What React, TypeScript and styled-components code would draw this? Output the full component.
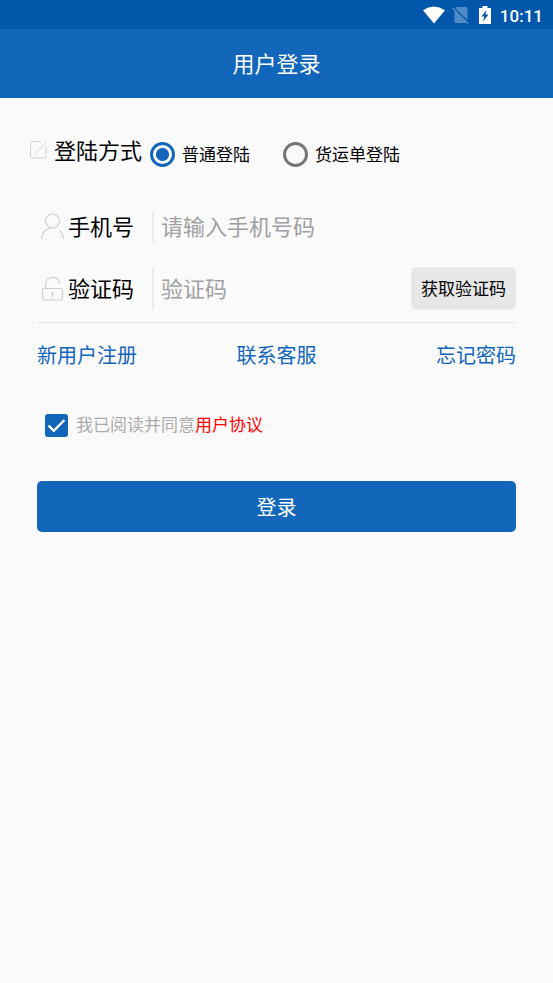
import React, { useState } from "react";
import styled, { createGlobalStyle } from "styled-components";

const blue = "#1166b9";

const GlobalStyle = createGlobalStyle`
  *, *::before, *::after { box-sizing: border-box; }
  body {
    margin: 0;
    background: #fafafa;
    color: #000;
    font-family: "Noto Sans CJK SC", sans-serif;
  }
  button, input { font-family: inherit; }
`;

const StatusBar = styled.div`
  display: flex;
  align-items: center;
  justify-content: flex-end;
  height: 29px;
  padding-right: 10px;
  background: #0257ab;
  color: #fff;
`;

const StatusIcon = styled.svg<{ $gap: number }>`
  flex: none;
  margin-right: ${(p) => p.$gap}px;
`;

const Clock = styled.time`
  font: 500 17px/20px Roboto, sans-serif;
  padding-top: 2px;
`;

const Header = styled.header`
  display: flex;
  align-items: center;
  justify-content: center;
  height: 69px;
  padding-bottom: 4px;
  background: ${blue};
  color: #fff;
`;

const Title = styled.h1`
  margin: 0;
  font-size: 22px;
  line-height: 32px;
  font-weight: 400;
`;

const Form = styled.form`
  padding: 34px 37px;
`;

const ModeRow = styled.fieldset`
  display: flex;
  align-items: center;
  min-width: 0;
  height: 34px;
  margin: 0 0 0 -8px;
  padding: 0;
  border: 0;
`;

const ModeTitle = styled.span`
  margin: 0 8px 0 6px;
  font-size: 22px;
  line-height: 32px;
  white-space: nowrap;
`;

const Options = styled.div`
  display: flex;
  gap: 33px;
  padding-top: 10px;
`;

const Option = styled.label`
  display: flex;
  align-items: center;
  gap: 7px;
  font-size: 17px;
  line-height: 26px;
  white-space: nowrap;
`;

const Radio = styled.input`
  appearance: none;
  width: 25px;
  height: 25px;
  margin: 0;
  border: 3px solid #757575;
  border-radius: 50%;
  &:checked {
    border-color: ${blue};
    background: radial-gradient(circle, ${blue} 6px, transparent 7px);
  }
`;

const Fields = styled.div`
  display: grid;
  grid-template-columns: minmax(0, 1fr);
  gap: 25px;
  margin-top: 45px;
  padding-bottom: 12px;
  border-bottom: 1px solid #e5e5e5;
`;

const FieldRow = styled.div`
  display: flex;
  align-items: center;
  padding-left: 3px;
`;

const FieldLabel = styled.label`
  display: flex;
  align-items: center;
  gap: 3px;
  width: 112px;
  font-size: 22px;
  line-height: 28px;
  white-space: nowrap;
`;

const LabelText = styled.span`
  padding-bottom: 3px;
`;

const TextField = styled.input<{ $tall?: boolean }>`
  flex: 1;
  min-width: 0;
  height: ${(p) => (p.$tall ? 43 : 31)}px;
  padding: 0 7px 4px;
  border: 0;
  border-left: 2px solid #ececec;
  background: transparent;
  font-size: 22px;
  line-height: 27px;
  outline: none;
  &::placeholder { color: #a0a0a0; opacity: 1; }
`;

const CodeButton = styled.button`
  flex: none;
  height: 43px;
  padding: 0 9px 2px;
  border: 1px solid #ececec;
  border-radius: 5px;
  background: #e7e7e7;
  color: #000;
  font-size: 17px;
  white-space: nowrap;
`;

const Links = styled.nav`
  display: grid;
  grid-template-columns: 1fr auto 1fr;
  margin-top: 17px;
`;

const TextLink = styled.a`
  color: ${blue};
  font-size: 20px;
  line-height: 30px;
  text-decoration: none;
  &:last-child { justify-self: end; }
  &:first-child { justify-self: start; }
`;

const Agreement = styled.div`
  display: flex;
  align-items: center;
  gap: 8px;
  margin: 41px 0 0 8px;
  color: #aaa;
  font-size: 17px;
  line-height: 26px;
`;

const AgreementText = styled.span`
  padding-bottom: 2px;
`;

const CheckWrap = styled.span`
  display: grid;
  width: 23px;
  height: 23px;
  > * { grid-area: 1 / 1; }
  > svg { pointer-events: none; }
`;

const Checkbox = styled.input`
  appearance: none;
  width: 23px;
  height: 23px;
  margin: 0;
  border: 2px solid #757575;
  border-radius: 3px;
  &:checked { border-color: ${blue}; background: ${blue}; }
`;

const AgreementLink = styled.a`
  color: #f00;
  text-decoration: none;
`;

const Submit = styled.button`
  display: block;
  width: 100%;
  height: 51px;
  margin-top: 42px;
  padding: 0;
  border: 0;
  border-radius: 5px;
  background: ${blue};
  color: #fff;
  font-size: 20px;
`;

const EditIcon = () => (
  <svg width="19" height="19" viewBox="0 0 19 19" fill="none" stroke="#d2d2d2" aria-hidden="true">
    <path d="M11.500 1.500H3.500Q1.500 1.500 1.500 3.500v12.500q0 2 2 2h11.500q2 0 2-2V7M5 14.500 17.500 2" />
  </svg>
);

const UserIcon = () => (
  <svg width="25" height="27" viewBox="0 0 25 27" fill="none" stroke="#cfcfcf" strokeWidth="1.2" aria-hidden="true">
    <circle cx="12.500" cy="8" r="7" />
    <path d="M1.500 26c.2-6 4-11 11-11M19.500 17.500q3.500 3 3.800 8.500" />
  </svg>
);

const LockIcon = () => (
  <svg width="25" height="25" viewBox="0 0 25 25" fill="none" stroke="#cfcfcf" strokeWidth="1.2" aria-hidden="true">
    <rect x="2.500" y="12.500" width="20" height="11.500" rx="1.800" />
    <path d="M5.500 12.500V9c0-10 14-10 14.500-1.500M12.500 17v4" />
    <circle cx="12.500" cy="17" r=".7" />
  </svg>
);

export default function App() {
  const [mode, setMode] = useState("normal");
  const [agreed, setAgreed] = useState(true);
  return (
    <>
      <GlobalStyle />
      <StatusBar>
        <StatusIcon $gap={7} width="22" height="18" viewBox="0 0 22 18" aria-hidden="true">
          <path d="M0 4.200Q11-3.200 22 4.200L11 17.500Z" fill="#fff" />
        </StatusIcon>
        <StatusIcon $gap={10} width="17" height="18" viewBox="0 0 17 18" aria-hidden="true">
          <path d="M5 1h9q1.500 0 1.500 1.500V14L3.500 2.500ZM2.500 4.500 14.500 17H4q-1.500 0-1.500-1.500Z" fill="#4f8cc7" />
          <path d="m.5 2 15.500 15.500" stroke="#4f8cc7" strokeWidth="1.500" />
        </StatusIcon>
        <StatusIcon $gap={9} width="12" height="18" viewBox="0 0 12 18" aria-hidden="true">
          <path d="M3.500 0h5v2H12v16H0V2h3.500Z" fill="#fff" />
          <path d="M7.500 4 2.500 10.500h2.800L4 15.500l5.500-7H6.600Z" fill="#0257ab" />
        </StatusIcon>
        <Clock>10:11</Clock>
      </StatusBar>
      <Header>
        <Title>用户登录</Title>
      </Header>
      <Form onSubmit={(e) => e.preventDefault()}>
        <ModeRow aria-labelledby="mode-title">
          <EditIcon />
          <ModeTitle id="mode-title">登陆方式</ModeTitle>
          <Options>
            <Option>
              <Radio type="radio" name="mode" checked={mode === "normal"} onChange={() => setMode("normal")} />
              普通登陆
            </Option>
            <Option>
              <Radio type="radio" name="mode" checked={mode === "waybill"} onChange={() => setMode("waybill")} />
              货运单登陆
            </Option>
          </Options>
        </ModeRow>
        <Fields>
          <FieldRow>
            <FieldLabel htmlFor="phone"><UserIcon /><LabelText>手机号</LabelText></FieldLabel>
            <TextField id="phone" type="tel" placeholder="请输入手机号码" />
          </FieldRow>
          <FieldRow>
            <FieldLabel htmlFor="code"><LockIcon /><LabelText>验证码</LabelText></FieldLabel>
            <TextField id="code" $tall placeholder="验证码" />
            <CodeButton type="button">获取验证码</CodeButton>
          </FieldRow>
        </Fields>
        <Links>
          <TextLink href="#register">新用户注册</TextLink>
          <TextLink href="#support">联系客服</TextLink>
          <TextLink href="#forgot">忘记密码</TextLink>
        </Links>
        <Agreement>
          <CheckWrap>
            <Checkbox id="agree" type="checkbox" checked={agreed} onChange={(e) => setAgreed(e.target.checked)} />
            {agreed && (
              <svg width="23" height="23" viewBox="0 0 23 23" fill="none" stroke="#fff" strokeWidth="2.400" aria-hidden="true">
                <path d="m3.500 11.500 5.300 5.300L19.500 6" />
              </svg>
            )}
          </CheckWrap>
          <AgreementText>
            <label htmlFor="agree">我已阅读并同意</label>
            <AgreementLink href="#terms">用户协议</AgreementLink>
          </AgreementText>
        </Agreement>
        <Submit type="submit">登录</Submit>
      </Form>
    </>
  );
}
